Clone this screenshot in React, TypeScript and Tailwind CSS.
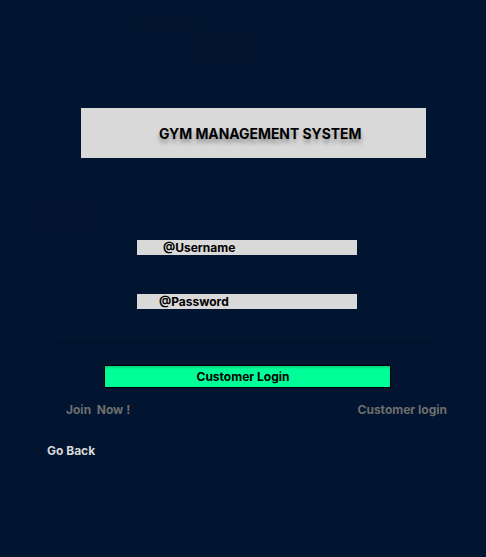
export default function App() {
  return (
    <div
      className="relative w-[486px] h-[557px] overflow-hidden bg-[#011430]"
      style={{ fontFamily: 'Inter, "Noto Sans", sans-serif' }}
    >
      {/* faint background blocks */}
      <div className="absolute left-[133px] top-[16px] w-[67px] h-[17px] bg-[#01132d]" />
      <div className="absolute left-[100px] top-[33px] w-[10px] h-[67px] bg-[#01132e]" />
      <div className="absolute left-[192px] top-[33px] w-[67px] h-[33px] bg-[#01132d]" />
      <div className="absolute left-[33px] top-[200px] w-[67px] h-[33px] bg-[#01132e]" />
      <div className="absolute left-[0px] top-[500px] w-[486px] h-[57px] bg-[#011531]" />

      <div className="relative flex flex-col">
        <div className="ml-[81px] mt-[108px] w-[345px] h-[50px] bg-[#d9d9d9] flex items-center pl-[78px] pt-[2px]">
          <span className="text-[13.9px] font-bold text-black [text-shadow:0_4px_4px_rgba(0,0,0,0.35)]">
            GYM MANAGEMENT SYSTEM
          </span>
        </div>

        <div className="ml-[137px] mt-[82px] w-[220px] h-[15px] bg-[#d9d9d9] flex items-center pl-[26px]">
          <span className="text-[12px] font-bold text-black leading-none">@Username</span>
        </div>

        <div className="ml-[137px] mt-[39px] w-[220px] h-[15px] bg-[#d9d9d9] flex items-center pl-[22px]">
          <span className="text-[12px] font-bold text-black leading-none">@Password</span>
        </div>

        <div className="ml-[55px] mt-[33px] w-[377px] h-px bg-[#000f24]" />

        <button className="ml-[104px] mt-[22px] w-[287px] h-[23px] border border-black bg-[#00ff99] flex items-center justify-center pr-[9px] shadow-[inset_0_2px_2px_rgba(0,0,0,0.15)]">
          <span className="text-[12px] font-bold text-black leading-none">Customer Login</span>
        </button>

        <div className="ml-[66px] mt-[14px] w-[381px] flex justify-between text-[12px] font-bold text-[#6e6e6e] leading-[15px]">
          <span className="whitespace-pre">Join  Now !</span>
          <span>Customer login</span>
        </div>

        <div className="ml-[47px] mt-[26px] text-[12px] font-bold text-[#d9d9d9] leading-[15px]">Go Back</div>
      </div>
    </div>
  );
}
